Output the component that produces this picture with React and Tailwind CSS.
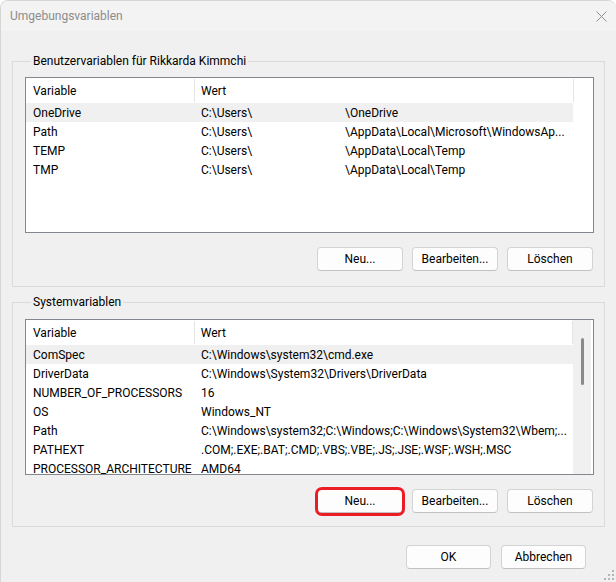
import React from 'react';

const userVars = [
  { name: 'OneDrive', dir: 'C:\\Users\\', rest: '\\OneDrive', selected: true },
  { name: 'Path', dir: 'C:\\Users\\', rest: '\\AppData\\Local\\Microsoft\\WindowsAp...' },
  { name: 'TEMP', dir: 'C:\\Users\\', rest: '\\AppData\\Local\\Temp' },
  { name: 'TMP', dir: 'C:\\Users\\', rest: '\\AppData\\Local\\Temp' },
];

const systemVars = [
  { name: 'ComSpec', value: 'C:\\Windows\\system32\\cmd.exe', selected: true },
  { name: 'DriverData', value: 'C:\\Windows\\System32\\Drivers\\DriverData' },
  { name: 'NUMBER_OF_PROCESSORS', value: '16' },
  { name: 'OS', value: 'Windows_NT' },
  { name: 'Path', value: 'C:\\Windows\\system32;C:\\Windows;C:\\Windows\\System32\\Wbem;...' },
  { name: 'PATHEXT', value: '.COM;.EXE;.BAT;.CMD;.VBS;.VBE;.JS;.JSE;.WSF;.WSH;.MSC' },
  { name: 'PROCESSOR_ARCHITECTURE', value: 'AMD64' },
];

function WinButton({ children, highlight, className = 'w-[86px]' }) {
  return (
    <button
      className={`relative h-[24px] ${className} rounded-[4px] border border-[#d3d3d3] border-b-[#c2c2c2] bg-[#fdfdfd] text-[12px] leading-none text-black`}
    >
      {children}
      {highlight && (
        <span className="absolute -left-[3px] -right-[3px] -top-[3px] -bottom-[4px] rounded-[7px] border-[3px] border-[#ec1c24]" />
      )}
    </button>
  );
}

function HeaderRow() {
  return (
    <div className="flex h-[25px] shrink-0 items-center bg-white">
      <div className="w-[168px] pl-[7px]">Variable</div>
      <div className="h-[23px] w-px bg-[#e5e5e5]" />
      <div className="w-[378px] pl-[6px]">Wert</div>
      <div className="h-[23px] w-px bg-[#e5e5e5]" />
    </div>
  );
}

function Row({ name, selected, children }) {
  return (
    <div className={`flex h-[19px] w-[547px] shrink-0 items-center ${selected ? 'bg-[#f0f0f0]' : ''}`}>
      <div className="w-[168px] truncate pl-[7px]">{name}</div>
      <div className="w-[379px] truncate whitespace-nowrap pl-[7px]">{children}</div>
    </div>
  );
}

function GroupBox({ title, className, children }) {
  return (
    <fieldset className={`border border-[#dadada] pl-[12px] pr-[10px] ${className}`}>
      <legend className="ml-[6px] px-[2px] leading-[16px]">{title}</legend>
      {children}
    </fieldset>
  );
}

function ButtonRow({ highlightNew }) {
  return (
    <div className="mt-[14px] mr-px flex justify-end gap-[9px]">
      <WinButton highlight={highlightNew}>Neu...</WinButton>
      <WinButton>Bearbeiten...</WinButton>
      <WinButton>Löschen</WinButton>
    </div>
  );
}

export default function App() {
  return (
    <div className="h-[582px] w-[616px] bg-white text-[12px] text-black" style={{ fontFamily: 'Roboto, "Liberation Sans", sans-serif' }}>
      <div className="relative flex h-full w-full flex-col overflow-hidden rounded-t-[8px] border-l border-t border-[#d6d6d6] bg-[#f0f0f0]">
        {/* Titelleiste */}
        <div className="flex h-[30px] shrink-0 items-center justify-between bg-[#f3f3f3] pl-[9px] pr-[9px]">
          <span className="text-[#8c8c8c]">Umgebungsvariablen</span>
          <svg width="11" height="11" viewBox="0 0 11 11" className="text-[#8f8f8f]">
            <path d="M0.5 0.5 L10.5 10.5 M10.5 0.5 L0.5 10.5" stroke="currentColor" strokeWidth="1" fill="none" />
          </svg>
        </div>

        <div className="flex flex-col px-[11px]">
          {/* Benutzervariablen */}
          <GroupBox title="Benutzervariablen für Rikkarda Kimmchi" className="mt-[22px] pb-[15px]">
            <div className="mt-[8px] flex h-[156px] flex-col border border-[#828790] bg-white">
              <HeaderRow />
              {userVars.map(v => (
                <Row key={v.name} name={v.name} selected={v.selected}>
                  <span className="inline-block w-[144px]">{v.dir}</span>
                  <span>{v.rest}</span>
                </Row>
              ))}
            </div>
            <ButtonRow />
          </GroupBox>

          {/* Systemvariablen */}
          <GroupBox title="Systemvariablen" className="mt-[7px] pb-[13px]">
            <div className="mt-[9px] flex h-[156px] border border-[#828790] bg-white">
              <div className="flex w-[547px] flex-col overflow-hidden">
                <HeaderRow />
                {systemVars.map(v => (
                  <Row key={v.name} name={v.name} selected={v.selected}>{v.value}</Row>
                ))}
              </div>
              <div className="flex w-[18px] flex-col items-center bg-[#f0f0f0] pt-[18px]">
                <div className="h-[47px] w-[3px] rounded-full bg-[#8a8a8a]" />
              </div>
            </div>
            <ButtonRow highlightNew />
          </GroupBox>

          {/* OK / Abbrechen */}
          <div className="mt-[18px] mr-[19px] flex justify-end gap-[10px]">
            <WinButton className="w-[85px]">OK</WinButton>
            <WinButton className="w-[85px]">Abbrechen</WinButton>
          </div>
        </div>

        {/* Größenänderungsgriff */}
        <svg width="12" height="12" viewBox="0 0 12 12" className="absolute bottom-[1px] right-[1px]">
          <g fill="#b5b5b5">
            <rect x="9" y="1" width="2" height="2" />
            <rect x="5" y="5" width="2" height="2" />
            <rect x="9" y="5" width="2" height="2" />
            <rect x="1" y="9" width="2" height="2" />
            <rect x="5" y="9" width="2" height="2" />
            <rect x="9" y="9" width="2" height="2" />
          </g>
        </svg>
      </div>
    </div>
  );
}
